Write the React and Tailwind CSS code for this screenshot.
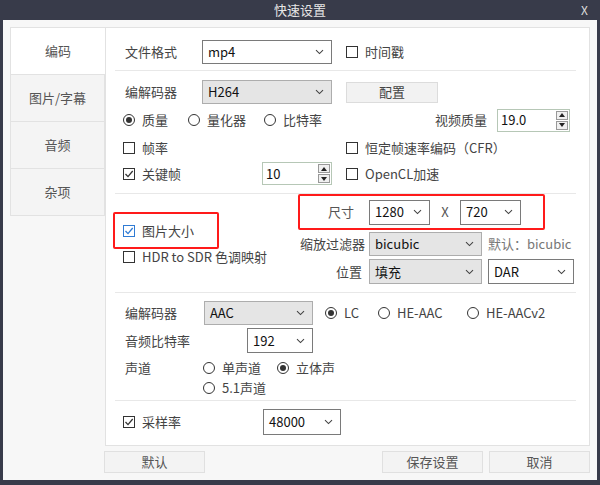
import React from 'react';

const FONT = { fontFamily: '"Noto Sans CJK SC", "Noto Sans", sans-serif' };

function Chevron() {
  return (
    <svg width="9" height="6" viewBox="0 0 9 6" className="shrink-0">
      <path d="M1 1.2 L4.5 4.6 L8 1.2" fill="none" stroke="#444" strokeWidth="1.1" />
    </svg>
  );
}

// 드롭다운 (회색 / 흰색)
function Select({ value, w, h = 'h-[24px]', gray }) {
  return (
    <div
      className={`${w} ${h} shrink-0 flex items-center justify-between pl-[5px] pr-[7px] border ${
        gray ? 'bg-[#e5e5e5] border-[#adadad]' : 'bg-white border-[#7a7a7a]'
      } text-[13px] text-[#111]`}
    >
      <span>{value}</span>
      <Chevron />
    </div>
  );
}

function Check({ label, checked, blue, w }) {
  const c = blue ? '#2f7bd4' : '#333';
  return (
    <div className={`${w || ''} shrink-0 flex items-center gap-[7px]`}>
      <div
        className={`w-[12px] h-[12px] border flex items-center justify-center bg-white ${
          blue ? 'border-[#2f7bd4]' : 'border-[#333]'
        }`}
      >
        {checked && (
          <svg width="10" height="10" viewBox="0 0 10 10">
            <path d="M1.5 5 L4 7.6 L8.7 2" fill="none" stroke={c} strokeWidth="1.3" />
          </svg>
        )}
      </div>
      <span className="text-[13px] text-[#444] whitespace-nowrap">{label}</span>
    </div>
  );
}

function Radio({ label, checked, w }) {
  return (
    <div className={`${w || ''} shrink-0 flex items-center gap-[7px]`}>
      <div className="w-[12px] h-[12px] rounded-full border border-[#333] flex items-center justify-center bg-white">
        {checked && <div className="w-[6px] h-[6px] rounded-full bg-[#333]" />}
      </div>
      <span className="text-[13px] text-[#444] whitespace-nowrap">{label}</span>
    </div>
  );
}

function Spin({ value, w, h }) {
  return (
    <div className={`${w} ${h} shrink-0 flex items-center justify-between border border-[#b6c7b6] bg-white pl-[3px] pr-[1px]`}>
      <span className="text-[13px] text-[#111]">{value}</span>
      <div className="flex flex-col gap-[1px]">
        <div className="w-[12px] h-[9px] border border-[#999] bg-[#f0f0f0] flex items-center justify-center">
          <svg width="6" height="4" viewBox="0 0 6 4"><path d="M0 4 L3 0 L6 4 Z" fill="#222" /></svg>
        </div>
        <div className="w-[12px] h-[9px] border border-[#999] bg-[#f0f0f0] flex items-center justify-center">
          <svg width="6" height="4" viewBox="0 0 6 4"><path d="M0 0 L3 4 L6 0 Z" fill="#222" /></svg>
        </div>
      </div>
    </div>
  );
}

function Sep({ mt }) {
  return <div className={`${mt} h-px bg-[#e8e8e8] ml-[9px] mr-[13px]`} />;
}

const Label = ({ children, w }) => (
  <span className={`${w} shrink-0 text-[13px] text-[#444] pl-[2px] whitespace-nowrap`}>{children}</span>
);

const tabs = ['编码', '图片/字幕', '音频', '杂项'];

export default function App() {
  return (
    <div className="w-[600px] h-[485px] bg-[#383b4a] flex flex-col" style={FONT}>
      {/* 제목 표시줄 */}
      <div className="h-[20px] relative flex items-center justify-center text-[13px] text-[#e6e6e6]">
        快速设置
        <span className="absolute right-[12px] top-[1px] text-[12px] text-[#ddd]">X</span>
      </div>

      <div className="flex-1 mx-[3px] mb-[5px] bg-[#f7f7f7] flex flex-col px-[7px] pt-[7px] pb-[7px]">
        <div className="flex h-[419px]">
          {/* 탭 */}
          <div className="w-[95px] shrink-0 flex flex-col">
            {tabs.map((t, i) => (
              <div
                key={t}
                className={`h-[48px] flex items-center justify-center border border-[#e2e2e2] -mt-px first:mt-0 text-[13px] text-[#555] ${
                  i === 0 ? 'bg-white border-r-0' : 'bg-[#f4f4f4]'
                }`}
              >
                {t}
              </div>
            ))}
          </div>

          {/* 내용 */}
          <div className="flex-1 bg-white border border-[#e2e2e2] flex flex-col">
            {/* 비디오 */}
            <div className="mt-[12px] h-[24px] flex items-center pl-[17px]">
              <Label w="w-[79px]">文件格式</Label>
              <Select value="mp4" w="w-[130px]" />
              <div className="ml-[14px]"><Check label="时间戳" /></div>
            </div>
            <Sep mt="mt-[6px]" />
            <div className="mt-[9px] h-[24px] flex items-center pl-[17px]">
              <Label w="w-[79px]">编解码器</Label>
              <Select value="H264" w="w-[130px]" gray />
              <div className="ml-[14px] w-[92px] h-[21px] bg-[#f2f2f2] border border-[#dcdcdc] flex items-center justify-center text-[13px] text-[#444]">
                配置
              </div>
            </div>
            <div className="mt-[5px] h-[22px] flex items-center pl-[17px]">
              <Radio label="质量" checked w="w-[65px]" />
              <Radio label="量化器" w="w-[76px]" />
              <Radio label="比特率" />
              <span className="ml-auto text-[13px] text-[#444]">视频质量</span>
              <div className="ml-[10px] mr-[19px]"><Spin value="19.0" w="w-[73px]" h="h-[23px]" /></div>
            </div>
            <div className="mt-[6px] h-[22px] flex items-center pl-[17px]">
              <Check label="帧率" w="w-[223px]" />
              <Check label="恒定帧速率编码（CFR）" />
            </div>
            <div className="mt-[3px] h-[23px] flex items-center pl-[17px]">
              <Check label="关键帧" checked w="w-[139px]" />
              <Spin value="10" w="w-[70px]" h="h-[23px]" />
              <div className="ml-[14px]"><Check label="OpenCL加速" /></div>
            </div>
            <Sep mt="mt-[8px]" />

            {/* 크기 */}
            <div className="flex">
              <div className="w-[192px] shrink-0 flex flex-col">
                <div className="ml-[7px] mt-[18px] w-[106px] h-[37px] border-2 border-[#ff1a1a] rounded-[2px] flex items-center pl-[8px]">
                  <Check label="图片大小" checked blue />
                </div>
                <div className="h-[16px] flex items-center pl-[17px]">
                  <Check label="HDR to SDR 色调映射" />
                </div>
              </div>
              <div className="flex flex-col">
                <div className="w-[247px] h-[36px] border-2 border-[#ff1a1a] rounded-[2px] flex items-center">
                  <span className="w-[54px] text-right text-[13px] text-[#555]">尺寸</span>
                  <div className="ml-[15px]"><Select value="1280" w="w-[61px]" h="h-[25px]" /></div>
                  <span className="w-[30px] text-center text-[13px] text-[#555]">X</span>
                  <Select value="720" w="w-[61px]" h="h-[25px]" />
                </div>
                <div className="mt-[2px] h-[24px] flex items-center">
                  <span className="w-[71px] shrink-0 pl-[2px] text-[13px] text-[#444]">缩放过滤器</span>
                  <Select value="bicubic" w="w-[113px]" gray />
                  <span className="ml-[6px] text-[13px] text-[#777] whitespace-nowrap">默认：bicubic</span>
                </div>
                <div className="mt-[3px] h-[25px] flex items-center">
                  <span className="w-[71px] shrink-0 pr-[7px] text-right text-[13px] text-[#444]">位置</span>
                  <Select value="填充" w="w-[113px]" h="h-[25px]" gray />
                  <div className="ml-[6px]"><Select value="DAR" w="w-[86px]" h="h-[25px]" /></div>
                </div>
              </div>
            </div>
            <Sep mt="mt-[8px]" />

            {/* 오디오 */}
            <div className="mt-[8px] h-[24px] flex items-center pl-[17px]">
              <Label w="w-[81px]">编解码器</Label>
              <Select value="AAC" w="w-[109px]" gray />
              <div className="ml-[12px] flex items-center">
                <Radio label="LC" checked w="w-[53px]" />
                <Radio label="HE-AAC" w="w-[89px]" />
                <Radio label="HE-AACv2" />
              </div>
            </div>
            <div className="mt-[3px] h-[25px] flex items-center pl-[17px]">
              <Label w="w-[124px]">音频比特率</Label>
              <Select value="192" w="w-[66px]" h="h-[25px]" />
            </div>
            <div className="mt-[6px] h-[18px] flex items-center pl-[17px]">
              <Label w="w-[80px]">声道</Label>
              <Radio label="单声道" w="w-[74px]" />
              <Radio label="立体声" checked />
            </div>
            <div className="mt-[2px] h-[18px] flex items-center pl-[97px]">
              <Radio label="5.1声道" />
            </div>
            <Sep mt="mt-[3px]" />
            <div className="mt-[8px] h-[26px] flex items-center pl-[17px]">
              <Check label="采样率" checked w="w-[140px]" />
              <Select value="48000" w="w-[78px]" h="h-[26px]" />
            </div>
          </div>
        </div>

        {/* 버튼 */}
        <div className="mt-[5px] h-[22px] flex">
          {['默认'].map((b) => (
            <div key={b} className="ml-[94px] w-[101px] bg-[#f3f3f3] border border-[#e0e0e0] flex items-center justify-center text-[13px] text-[#555]">
              {b}
            </div>
          ))}
          <div className="ml-auto w-[101px] bg-[#f3f3f3] border border-[#e0e0e0] flex items-center justify-center text-[13px] text-[#555]">
            保存设置
          </div>
          <div className="ml-[6px] w-[101px] bg-[#f3f3f3] border border-[#e0e0e0] flex items-center justify-center text-[13px] text-[#555]">
            取消
          </div>
        </div>
      </div>
    </div>
  );
}
